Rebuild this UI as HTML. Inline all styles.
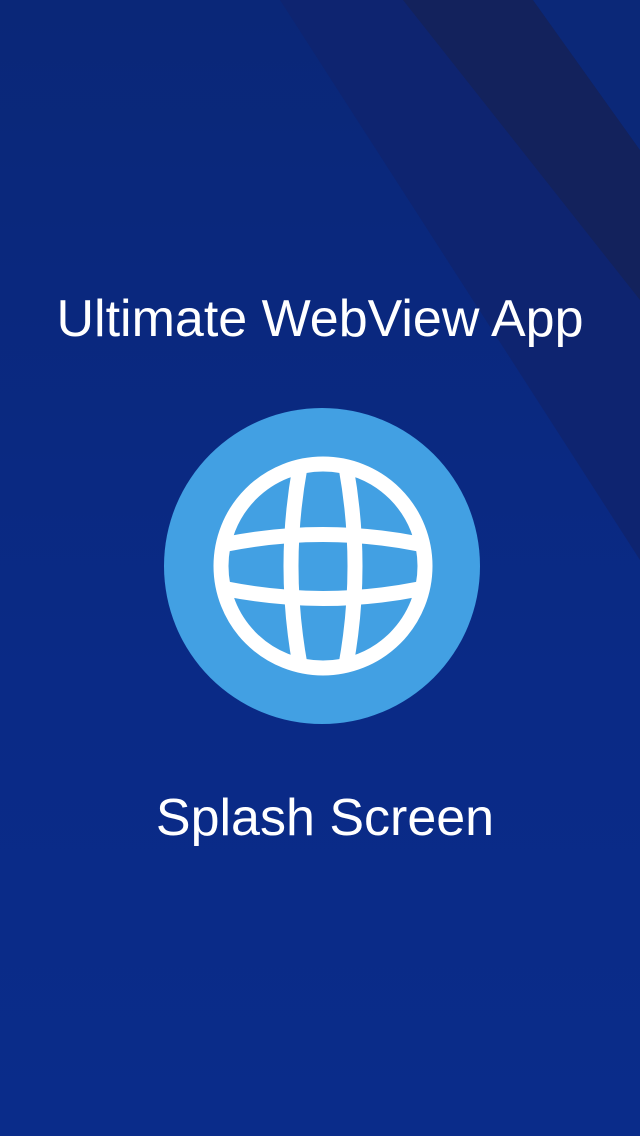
<!DOCTYPE html>
<html><head><meta charset="utf-8"><style>
html,body{margin:0;padding:0}
body{width:640px;height:1136px;overflow:hidden;position:relative;background:linear-gradient(180deg,#0a2778 0%,#0a2a86 60%,#0a2c8a 100%);font-family:"Liberation Sans",sans-serif;color:#fff}
svg{position:absolute;left:0;top:0}
.t{position:absolute;left:0;width:640px;text-align:center;font-size:52px;line-height:1}
</style></head><body>
<svg width="640" height="1136">
<polygon points="280,0 640,0 640,560" fill="#0e2470"/>
<polygon points="403,0 533,0 640,150 640,300" fill="#13225c"/>
<polygon points="533,0 640,0 640,150" fill="#0b2878"/>
<circle cx="322" cy="566" r="158" fill="#42a0e3"/>
<g fill="none" stroke="#fff" stroke-width="15">
<circle cx="323" cy="566" r="102"/>
<path d="M300 467 Q282 566 300 665"/>
<path d="M346 467 Q364 566 346 665"/>
<path d="M227 544 Q323 525 419 544"/>
<path d="M227 589 Q323 608 419 589"/>
</g>
</svg>
<div class="t" style="top:293px">Ultimate WebView App</div>
<div class="t" style="top:792px;left:5px">Splash Screen</div>
</body></html>
